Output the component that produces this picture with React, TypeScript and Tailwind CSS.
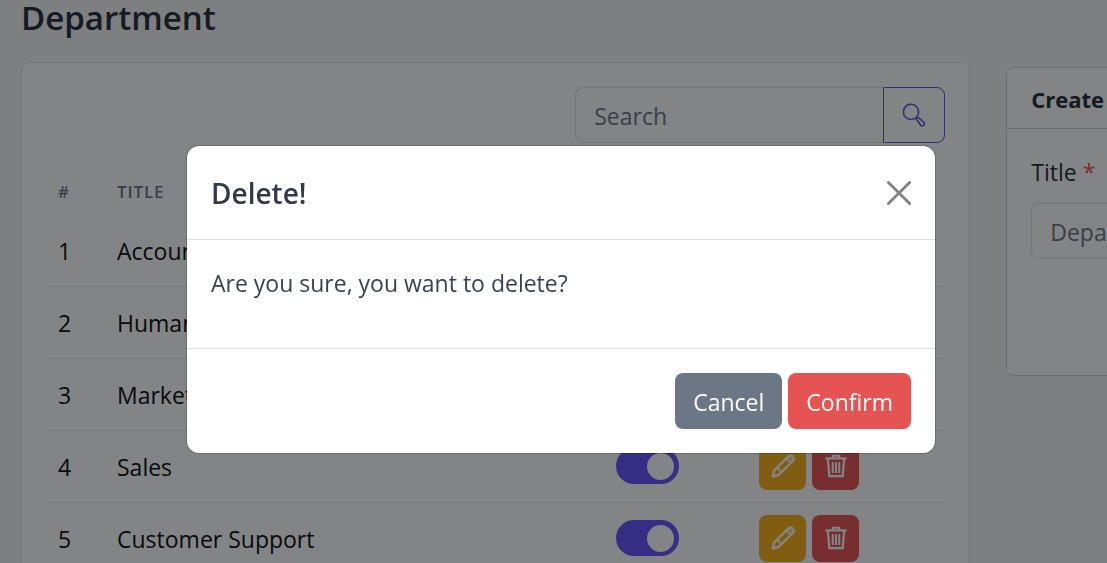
import { useState } from "react";

const departments = [
  "Accounting",
  "Human Resources",
  "Marketing",
  "Sales",
  "Customer Support",
];

function SearchIcon() {
  return (
    <svg className="size-6" viewBox="0 0 24 24" fill="none" stroke="currentColor" strokeWidth="1.6" aria-hidden="true">
      <circle cx="9" cy="8.9" r="7.6" />
      <path d="M14.3 16.2 A1.7 1.7 0 0 1 16.7 14.8 L22 19.5 A2.2 2.2 0 0 1 19.2 22.7 Z" strokeLinejoin="round" />
      <path d="M14 13.9 L15.4 15.3" />
    </svg>
  );
}

function PencilIcon() {
  return (
    <svg className="size-6" viewBox="0 0 24 24" fill="none" stroke="currentColor" strokeWidth="2.3" strokeLinejoin="round" aria-hidden="true">
      <path d="M1.6 22.6 L3 16.7 L17.2 2.4 Q19.8 0.6 21.8 2.4 Q23.6 4.6 21.8 7 L7.4 21.2 Z" />
      <path d="M15.4 4.8 L19.2 8.6" strokeWidth="2" />
      <path d="M18 3 L21 6" strokeWidth="1.3" />
      <path d="M3 16.7 L6.4 13.8 L10.2 17.8 L7.4 21.2" strokeWidth="1.8" />
      <path d="M1.6 22.6 L2.4 18.8 L5.4 21.6 Z" fill="currentColor" strokeWidth="1" />
    </svg>
  );
}

function TrashIcon() {
  return (
    <svg className="size-6" viewBox="0 0 24 24" fill="none" stroke="currentColor" strokeWidth="2" aria-hidden="true">
      <path d="M1.4 4.4 H22.6" strokeWidth="2.2" />
      <path d="M8.8 4 V1.8 H15.2 V4" />
      <path d="M3.9 4.6 L5.3 22.2 H18.7 L20.1 4.6" strokeWidth="2.2" />
      <path d="M8.8 8.3 V19 M12 8.3 V19 M15.2 8.3 V19" strokeWidth="2.1" />
    </svg>
  );
}

function CloseIcon() {
  return (
    <svg className="size-6" viewBox="0 0 24 24" fill="none" stroke="currentColor" strokeWidth="2.8" strokeLinecap="round" aria-hidden="true">
      <path d="M1.4 1.4 L22.6 22.6 M22.6 1.4 L1.4 22.6" />
    </svg>
  );
}

function DepartmentRow({ index, title }: { index: number; title: string }) {
  const [active, setActive] = useState(true);
  return (
    <tr className="h-18 border-b border-[#eceef1] text-[#080a0c]">
      <td className="px-3 pt-[2px]">{index}</td>
      <td className="px-3 pt-[2px]">{title}</td>
      <td className="px-3">
        <input
          type="checkbox"
          role="switch"
          aria-label={`${title} active`}
          checked={active}
          onChange={() => setActive(!active)}
          className="block h-9 w-[63px] appearance-none rounded-full bg-gray-400 p-[5px] before:block before:size-[27px] before:rounded-full before:bg-white checked:bg-[#6054fe] checked:before:ml-[26px]"
        />
      </td>
      <td className="px-3">
        <div className="flex gap-[6px]">
          <button aria-label={`Edit ${title}`} className="flex size-[47px] items-center justify-center rounded-lg bg-[#f9b115] text-white">
            <PencilIcon />
          </button>
          <button aria-label={`Delete ${title}`} className="flex size-[47px] items-center justify-center rounded-lg bg-[#e55353] text-white">
            <TrashIcon />
          </button>
        </div>
      </td>
    </tr>
  );
}

function DepartmentList() {
  return (
    <section className="rounded-lg border border-[#dbdfe6] bg-white px-6 pt-6 pb-6">
      <form className="ml-auto flex h-14 max-w-[370px]">
        <input
          type="search"
          aria-label="Search"
          placeholder="Search"
          className="min-w-0 flex-1 rounded-l-lg border border-r-0 border-[#dbdfe6] px-[18px] pt-[2px] placeholder:text-[#6d7482]"
        />
        <button type="button" aria-label="Submit search" className="flex w-[62px] items-center justify-center rounded-r-lg border border-[#5856d6] text-[#5856d6]">
          <SearchIcon />
        </button>
      </form>
      <table className="mt-6 w-full table-fixed text-left">
        <thead>
          <tr className="h-[47px] text-[17px] tracking-wider text-[#6d7482]">
            <th className="w-[59px] px-3 pt-[2px] font-semibold">#</th>
            <th className="px-3 pt-[2px] font-semibold">TITLE</th>
            <th className="w-[143px] px-3" aria-label="Status" />
            <th className="w-[198px] px-3" aria-label="Actions" />
          </tr>
        </thead>
        <tbody>
          {departments.map((title, i) => (
            <DepartmentRow key={title} index={i + 1} title={title} />
          ))}
        </tbody>
      </table>
    </section>
  );
}

function CreateCard() {
  return (
    <section className="mt-[5px] min-h-[309px] self-start rounded-lg border border-[#cfd3dc] bg-white">
      <h2 className="flex h-[61px] items-center border-b border-[#cfd3dc] px-6 pt-[2px] text-[22px] font-bold text-[#252b36]">Create</h2>
      <div className="p-6">
        <label htmlFor="title" className="block h-[50px] leading-[38px]">
          Title <span className="text-[#e55353]">*</span>
        </label>
        <input
          id="title"
          placeholder="Department"
          className="h-14 w-full rounded-lg border border-[#dbdfe6] px-[18px] pt-[2px] placeholder:text-[#6d7482]"
        />
      </div>
    </section>
  );
}

function DeleteDialog() {
  return (
    <div className="fixed inset-0 flex items-start justify-center bg-[#080a0c]/50 pt-[146px] pl-[15px]">
      <div role="dialog" aria-modal="true" aria-labelledby="dialog-title" className="w-full max-w-[748px] rounded-xl bg-white ring-1 ring-[#080a0c]/20">
        <header className="flex h-[94px] items-center justify-between border-b border-[#dbdfe6] px-6">
          <h2 id="dialog-title" className="text-[28px] font-semibold text-[#323a49]">Delete!</h2>
          <button aria-label="Close" className="text-[#808182]">
            <CloseIcon />
          </button>
        </header>
        <p className="h-[108px] p-6 leading-[38px] text-[#3a4150]">Are you sure, you want to delete?</p>
        <footer className="flex justify-end gap-[6px] border-t border-[#dbdfe6] p-6">
          <button className="h-14 rounded-lg bg-[#6b7785] px-[18px] pt-[2px] text-white">Cancel</button>
          <button className="h-14 rounded-lg bg-[#e55353] px-[18px] pt-[2px] text-white">Confirm</button>
        </footer>
      </div>
    </div>
  );
}

export default function App() {
  return (
    <div className="h-screen overflow-hidden bg-[#f3f4f7] font-['Open_Sans',sans-serif] text-[23px] text-[#252b36]">
      <main className="w-[134%] px-[21px]">
        <h1 className="h-[62px] text-[33px] leading-9 font-semibold">Department</h1>
        <div className="grid grid-cols-[949fr_456fr] gap-9">
          <DepartmentList />
          <CreateCard />
        </div>
      </main>
      <DeleteDialog />
    </div>
  );
}
